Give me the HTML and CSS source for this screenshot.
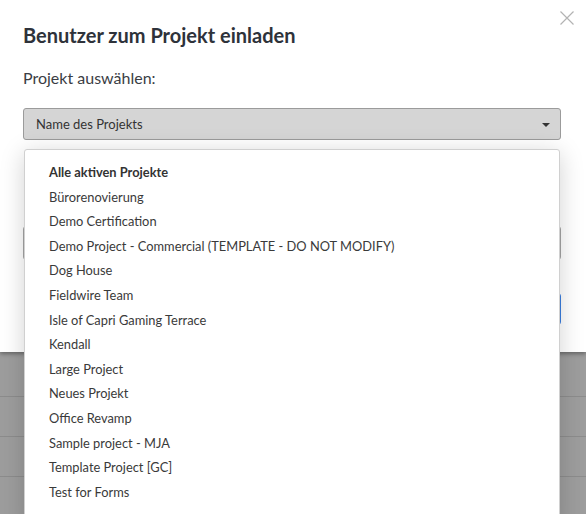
FILE: index.html
```html
<!DOCTYPE html>
<html lang="de">
<head>
<meta charset="utf-8">
<title>Benutzer einladen</title>
<link rel="stylesheet" href="styles.css">
</head>
<body>
<div class="backdrop">
  <div class="bg-row"></div>
  <div class="bg-row"></div>
  <div class="bg-row"></div>
  <div class="bg-row"></div>
</div>
<div class="modal">
  <button class="close" aria-label="Schließen">
    <svg width="14" height="14" viewBox="0 0 14 14"><path d="M0.5 0.5 L13.5 13.5 M13.5 0.5 L0.5 13.5" stroke="#b3b3b3" stroke-width="1.2" fill="none"/></svg>
  </button>
  <h1 class="title">Benutzer zum Projekt einladen</h1>
  <div class="label">Projekt auswählen:</div>
  <div class="select">
    <span>Name des Projekts</span>
    <span class="caret"></span>
  </div>
  <div class="hidden-input"></div>
  <div class="actions"><div class="btn-blue"></div></div>
</div>
<ul class="dropdown">
  <li class="group">Alle aktiven Projekte</li>
  <li>Bürorenovierung</li>
  <li>Demo Certification</li>
  <li>Demo Project - Commercial (TEMPLATE - DO NOT MODIFY)</li>
  <li>Dog House</li>
  <li>Fieldwire Team</li>
  <li>Isle of Capri Gaming Terrace</li>
  <li>Kendall</li>
  <li>Large Project</li>
  <li>Neues Projekt</li>
  <li>Office Revamp</li>
  <li>Sample project - MJA</li>
  <li>Template Project [GC]</li>
  <li>Test for Forms</li>
</ul>
</body>
</html>
```
FILE: styles.css
```css
html, body {
  margin: 0;
  padding: 0;
}
body {
  width: 586px;
  height: 514px;
  overflow: hidden;
  background: #9d9d9d;
  font-family: Lato, "Open Sans", sans-serif;
  position: relative;
}
.backdrop {
  padding-top: 357px;
  display: flex;
  flex-direction: column;
}
.bg-row {
  height: 40px;
  border-bottom: 1px solid #8c8c8c;
  box-sizing: border-box;
}
.modal {
  position: absolute;
  left: 0;
  top: 0;
  width: 586px;
  height: 352px;
  background: #fff;
  box-shadow: 0 2px 4px rgba(0,0,0,0.35);
  padding: 0 25px 0 23px;
  box-sizing: border-box;
}
.close {
  position: absolute;
  top: 11px;
  right: 12px;
  width: 14px;
  height: 14px;
  padding: 0;
  border: 0;
  background: none;
  display: flex;
}
.title {
  margin: 0;
  padding-top: 22px;
  font-size: 20px;
  font-weight: 700;
  line-height: 26px;
  color: #2e323a;
}
.label {
  margin-top: 19px;
  font-size: 16px;
  line-height: 22px;
  color: #3a3d44;
}
.select {
  margin-top: 19px;
  height: 32px;
  box-sizing: border-box;
  background: #d5d5d5;
  border: 1px solid #9b9b9b;
  border-radius: 3px;
  display: flex;
  align-items: center;
  justify-content: space-between;
  padding: 0 10px 0 12px;
  font-size: 13px;
  color: #333;
}
.caret {
  width: 0;
  height: 0;
  border-left: 4px solid transparent;
  border-right: 4px solid transparent;
  border-top: 4px solid #333;
  margin-top: 2px;
}
.hidden-input {
  margin-top: 86px;
  height: 32px;
  border: 1px solid #a5a5a5;
  border-radius: 3px;
}
.actions {
  display: flex;
  justify-content: flex-end;
  margin-top: 33px;
}
.btn-blue {
  width: 80px;
  height: 30px;
  border: 1px solid #3a7ee0;
  border-radius: 3px;
  background: #fff;
}
.dropdown {
  position: absolute;
  left: 24px;
  top: 149px;
  width: 536px;
  height: 380px;
  box-sizing: border-box;
  margin: 0;
  padding: 10px 0 0 0;
  list-style: none;
  background: #fff;
  border: 1px solid #d0d0d0;
  border-radius: 3px;
  box-shadow: 0 4px 24px rgba(0,0,0,0.18);
}
.dropdown li {
  height: 24.6px;
  line-height: 24.6px;
  padding-left: 24px;
  font-size: 12.85px;
  color: #3a3a3a;
  white-space: nowrap;
}
.dropdown li.group {
  font-weight: 700;
  color: #333;
}
```
